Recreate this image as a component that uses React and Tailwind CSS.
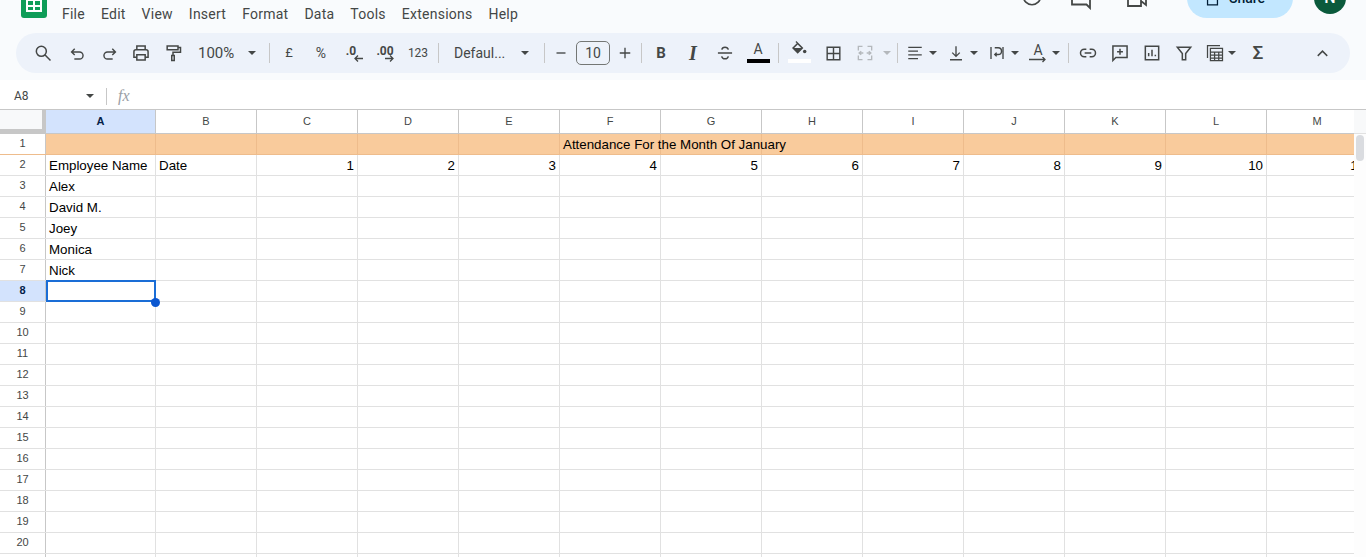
import React from 'react'

const columns = ['B', 'C', 'D', 'E', 'F', 'G', 'H', 'I', 'J', 'K', 'L', 'M']
const menu = ['File', 'Edit', 'View', 'Insert', 'Format', 'Data', 'Tools', 'Extensions', 'Help']
const names = { 3: 'Alex', 4: 'David M.', 5: 'Joey', 6: 'Monica', 7: 'Nick' }
const rows = Array.from({ length: 21 }, (_, i) => i + 1)

function Ico({ children, size = 20, className = '' }) {
  return (
    <svg width={size} height={size} viewBox="0 0 24 24" fill="none" stroke="currentColor" strokeWidth="1.8" className={'shrink-0 ' + className}>
      {children}
    </svg>
  )
}

function Caret({ light }) {
  return (
    <svg width="8" height="4" viewBox="0 0 8 4" className="shrink-0">
      <path d="M0 0h8L4 4z" fill={light ? '#b4b8bc' : '#444746'} />
    </svg>
  )
}

function Sep({ className = '' }) {
  return <div className={'h-5 w-px shrink-0 bg-[#c7c7c7] ' + className} />
}

function Group({ children }) {
  return (
    <div className="flex h-full w-[41px] shrink-0 items-center pl-[5px]">
      <div className="flex w-6 justify-center">{children}</div>
      <div className="ml-[2px] flex w-2 justify-center"><Caret /></div>
    </div>
  )
}

function Toolbar() {
  const btn = 'flex h-full shrink-0 items-center justify-center '
  return (
    <div className="mx-4 flex h-10 items-center rounded-[20px] bg-[#edf2fa] pl-[10px] text-[#444746]">
      <div className={btn + 'w-[34px]'}>
        <Ico><circle cx="10" cy="10" r="6" /><path d="M14.5 14.5 21 21" /></Ico>
      </div>
      <div className={btn + 'w-[34px]'}>
        <Ico size={19}><path d="M8.5 6 4.5 10l4 4M5 10h9.5a4.5 4.5 0 0 1 0 9H8" /></Ico>
      </div>
      <div className={btn + 'w-[31px]'}>
        <Ico size={19}><path d="m15.5 6 4 4-4 4M19 10H9.5a4.5 4.5 0 0 0 0 9H16" /></Ico>
      </div>
      <div className={btn + 'w-8'}>
        <Ico><path d="M7 8V3.5h10V8M7 17H3.5v-6.5A2.5 2.5 0 0 1 6 8h12a2.5 2.5 0 0 1 2.5 2.5V17H17" /><path d="M7 14h10v6.5H7z" /></Ico>
      </div>
      <div className={btn + 'w-8'}>
        <Ico><path d="M5 3.5h13V8H5zM18 5.5h3V11h-9v4" /><path d="M10.5 15h3v6h-3z" /></Ico>
      </div>
      <div className="ml-[9px] w-[37px] shrink-0 text-[15px] text-[#444746]">100%</div>
      <div className={btn + 'w-[34px]'}><Caret /></div>
      <Sep />
      <div className={btn + 'w-[38px] text-[13px]'}>£</div>
      <div className={btn + 'w-[26px] text-[14px]'}>%</div>
      <div className={btn + 'relative w-[38px]'}>
        <span className="-mt-[5px] -ml-[4px] text-[12px] leading-none font-bold">.0</span>
        <svg width="9" height="7" viewBox="0 0 9 7" className="absolute top-[22px] left-[20px]" fill="none" stroke="currentColor" strokeWidth="1.3"><path d="M9 3.5H1M4 .5l-3 3 3 3" /></svg>
      </div>
      <div className={btn + 'relative w-[26px]'}>
        <span className="-mt-[5px] text-[12px] leading-none font-bold">.00</span>
        <svg width="9" height="7" viewBox="0 0 9 7" className="absolute top-[22px] left-[13px]" fill="none" stroke="currentColor" strokeWidth="1.3"><path d="M0 3.5h8M5 .5l3 3-3 3" /></svg>
      </div>
      <div className={btn + 'w-10 text-[12px]'}>123</div>
      <Sep />
      <div className="ml-[15px] w-[54px] shrink-0 text-[14px] whitespace-nowrap">Defaul...</div>
      <div className={btn + 'w-[34px]'}><Caret /></div>
      <Sep className="ml-[2px]" />
      <div className={btn + 'w-[31px]'}><Ico size={18}><path d="M6 12h12" /></Ico></div>
      <div className="flex h-6 w-[34px] shrink-0 items-center justify-center rounded-[5px] border border-[#747775] text-[14px]">10</div>
      <div className={btn + 'w-[30px]'}><Ico size={18}><path d="M5 12h14M12 5v14" /></Ico></div>
      <Sep className="ml-px" />
      <div className={btn + 'w-[38px] text-[15px] font-bold'}>B</div>
      <div className={btn + "w-[26px] font-['Liberation_Serif',serif] text-[20px] font-bold italic"}>I</div>
      <div className={btn + 'w-[38px]'}>
        <Ico><path d="M3.5 12h17M16 8c-.5-2-2-3-4-3s-3.5 1-3.8 3M8 16c.5 2 2 3 4 3s3.5-1 4-3" /></Ico>
      </div>
      <div className="relative flex h-full w-7 shrink-0 justify-center pt-[8px] text-[14px] leading-[16px]">
        A
        <div className="absolute top-[26px] left-[3px] h-1 w-[23px] bg-black" />
      </div>
      <Sep className="ml-[6px]" />
      <div className="relative flex h-full w-10 shrink-0 justify-center pt-[8px]">
        <svg width="16" height="14" viewBox="0 0 18 16" fill="currentColor">
          <path d="M6 0 5 1l1.5 1.5L1 8l6.5 6.5L14 8zM3.5 8l4-4 4 4z" />
          <circle cx="15.5" cy="12" r="2" />
        </svg>
        <div className="absolute top-[26px] left-[9px] h-1 w-[23px] bg-white" />
      </div>
      <div className={btn + 'w-7'}>
        <Ico size={19}><path d="M4 4h16v16H4zM12 4v16M4 12h16" /></Ico>
      </div>
      <div className={btn + 'w-9 text-[#b4b8bc]'}>
        <Ico><path d="M9 4H4v5M9 20H4v-5M15 4h5v5M15 20h5v-5M10 12H5m2.5-2L5 12l2.5 2M14 12h5m-2.5-2 2.5 2-2.5 2" strokeWidth="1.6" /></Ico>
      </div>
      <div className={btn + 'w-2'}><Caret light /></div>
      <Sep className="ml-[6px]" />
      <Group><Ico size={18}><path d="M3 4.5h18M3 9.5h13M3 14.5h18M3 19.5h13" /></Ico></Group>
      <Group><Ico size={18}><path d="M12 3v13M7 11.5l5 5 5-5M4 21h16" /></Ico></Group>
      <Group><Ico size={18}><path d="M4 4v16M20 4v16M9 5h4.5a3.5 3.5 0 0 1 0 9H9m2.5-2.5L9 14l2.5 2.5" /></Ico></Group>
      <Group>
        <div className="relative h-[20px] w-[18px] text-center text-[14px] leading-[15px]">
          A
          <svg width="18" height="6" viewBox="0 0 18 6" className="absolute top-[14px] left-0" fill="none" stroke="currentColor" strokeWidth="1.3"><path d="M0 2.5h16M13.5 0 16 2.5 13.5 5" /></svg>
        </div>
      </Group>
      <Sep className="ml-[6px]" />
      <div className={btn + 'w-[38px]'}>
        <Ico><path d="M10 16.5H7.5a4.5 4.5 0 0 1 0-9H10M14 7.5h2.5a4.5 4.5 0 0 1 0 9H14M8 12h8" /></Ico>
      </div>
      <div className={btn + 'w-[26px]'}>
        <Ico><path d="M3.5 3.5h17v14H7L3.5 21zM12 7v7M8.5 10.5h7" /></Ico>
      </div>
      <div className={btn + 'w-[38px]'}>
        <Ico><path d="M4 4h16v16H4zM8 16v-4M12 16V8M16 16v-2" /></Ico>
      </div>
      <div className={btn + 'w-[26px]'}>
        <Ico><path d="M4 5h16l-6 7.5V20h-4v-7.5z" /></Ico>
      </div>
      <div className={btn + 'ml-[3px] w-[30px]'}>
        <Ico><path d="M3 18V3h15M6.5 6.5H21V21H6.5zM6.5 11H21M6.5 14.5H21M6.5 18H21M11.5 11v10M16.5 11v10" strokeWidth="1.5" /></Ico>
      </div>
      <div className={btn + 'w-1'}><Caret /></div>
      <div className={btn + 'w-12 text-[19px] font-medium'}>Σ</div>
      <div className={btn + 'mr-3 ml-auto w-8'}>
        <Ico size={19}><path d="m6 15 6-6 6 6" /></Ico>
      </div>
    </div>
  )
}

function Cell({ width = 'w-[101px]', row, children, right }) {
  return (
    <div className={'flex h-full shrink-0 items-center border-r px-[3px] pt-[2px] whitespace-nowrap text-black ' + width + (row === 1 ? ' border-[#eebc8c]' : ' border-[#e1e1e1]') + (right ? ' justify-end' : '')}>
      {children}
    </div>
  )
}

function Row({ n }) {
  const active = n === 8
  return (
    <div className={'flex h-[21px] shrink-0 border-b ' + (n === 1 ? 'border-[#eebc8c] bg-[#f9cb9c]' : 'border-[#e1e1e1]')}>
      <div className={'flex h-full w-[46px] shrink-0 items-center justify-center border-r border-[#c7c7c7] pb-[2px] text-[11px] ' + (active ? 'bg-[#d3e3fd] font-bold text-[#041e49]' : 'bg-white text-[#444746]')}>
        {n}
      </div>
      <div className="relative flex h-full">
        <Cell width="w-[110px]" row={n}>{n === 2 ? 'Employee Name' : names[n]}</Cell>
        {active && (
          <div className="absolute -top-px left-0 z-10 h-[22px] w-[110px] border-2 border-[#1a6dd6]">
            <div className="absolute -right-[6px] -bottom-[7px] h-[9px] w-[9px] rounded-full bg-[#0b57d0]" />
          </div>
        )}
        {columns.map((c, i) => (
          <Cell key={c} row={n} right={n === 2 && i > 0}>
            {n === 2 && i === 0 && 'Date'}
            {n === 2 && i > 0 && i}
            {n === 1 && c === 'F' && <span className="relative z-10">Attendance For the Month Of January</span>}
          </Cell>
        ))}
      </div>
    </div>
  )
}

export default function App() {
  return (
    <div className="h-[557px] w-[1366px] overflow-hidden bg-white font-['Roboto',sans-serif]">
      <div className="-mt-[22px] h-[102px] bg-[#f9fbfd]">
        <header className="flex h-[55px] items-start">
          <div className="mt-[4px] ml-[21px] flex h-9 w-[26px] shrink-0 flex-col items-center justify-end rounded-[3px] bg-[#0f9d58] pb-[6px]">
            <div className="grid h-[18px] w-[16px] grid-cols-2 grid-rows-3 gap-[2px] border-2 border-white bg-white">
              {[0, 1, 2, 3, 4, 5].map((i) => <div key={i} className="bg-[#0f9d58]" />)}
            </div>
          </div>
          <nav className="mt-[28px] ml-[7px] flex text-[14px] leading-4 tracking-[0.24px] text-[#444746]">
            {menu.map((m) => <span key={m} className="px-2">{m}</span>)}
          </nav>
          <div className="ml-auto flex items-start text-[#444746]">
            <div className="mt-[7px] mr-[26px]">
              <Ico size={22}><circle cx="12" cy="12" r="9.5" /><path d="M12 6.5V12l3.5 3.5" /></Ico>
            </div>
            <div className="mt-[8px] mr-[32px]">
              <Ico size={24}><path d="M3 4h18v18l-3.5-3.5H3zM7 9h10M7 13h10" /></Ico>
            </div>
            <div className="mt-[8px] mr-[38px]">
              <Ico size={24}><path d="M3 5h13v15H3zM16 10l5-4v13l-5-4" /></Ico>
            </div>
            <div className="flex h-10 w-[106px] items-center rounded-[20px] bg-[#c2e7ff] pl-[17px] text-[14px] font-medium text-[#001d35]">
              <Ico size={17}><path d="M5 9h14v12H5zM8 9V6a4 4 0 0 1 8 0v3" /></Ico>
              <span className="ml-[8px]">Share</span>
            </div>
            <div className="mt-[4px] mr-[20px] ml-[21px] flex h-8 w-8 items-center justify-center rounded-full bg-[#0b5a3c] text-[16px] font-medium text-white">N</div>
          </div>
        </header>
        <Toolbar />
      </div>

      <div className="mt-1 flex h-[25px] items-center pb-px text-[#444746]">
        <div className="ml-[14px] w-[72px] text-[12px]">A8</div>
        <Caret />
        <div className="ml-[12px] h-[17px] w-px bg-[#c7c7c7]" />
        <div className="ml-[11px] font-['Liberation_Serif',serif] text-[16px] text-[#9aa0a6] italic">fx</div>
      </div>

      <div className="flex h-[448px] border-t border-[#c7c7c7]">
        <div className="flex w-[1354px] shrink-0 flex-col overflow-hidden font-['Liberation_Sans',Arial,sans-serif] text-[13.33px]">
          <div className="flex h-6 shrink-0 border-b border-[#c7c7c7] text-[11px] text-[#444746]">
            <div className="h-full w-[46px] shrink-0 border-r-4 border-b-4 border-[#c7c7c7] bg-[#f8f9fa]" />
            <div className="flex h-full w-[110px] shrink-0 items-center justify-center border-r border-[#c7c7c7] bg-[#d3e3fd] font-bold text-[#041e49]">A</div>
            {columns.map((c) => (
              <div key={c} className="flex h-full w-[101px] shrink-0 items-center justify-center border-r border-[#c7c7c7]">{c}</div>
            ))}
          </div>
          {rows.map((n) => <Row key={n} n={n} />)}
        </div>
        <div className="flex-1 bg-[#fdfdfd]">
          <div className="h-6 border-b border-[#e1e1e1] bg-[#f8f9fa]" />
          <div className="mx-[2px] mt-px h-[26px] rounded-[5px] bg-[#dadce0]" />
        </div>
      </div>
    </div>
  )
}
